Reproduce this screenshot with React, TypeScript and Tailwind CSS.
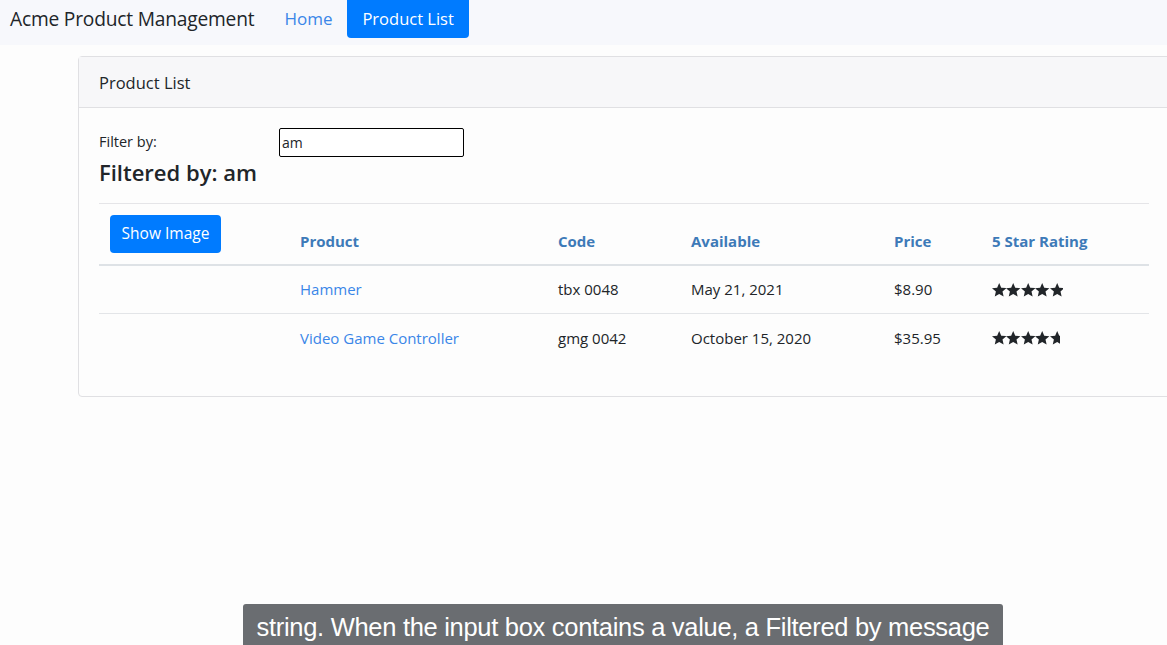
import React from "react";

const Star = () => (
  <svg viewBox="0 0 24 23" className="w-[14.4px] h-[14px] shrink-0" fill="#212529">
    <path d="M12 0l3.4 7.6 8.6.8-6.5 5.7 1.9 8.4L12 18.1 4.6 22.5l1.9-8.4L0 8.4l8.6-.8z" />
  </svg>
);

const Stars = ({ width }: { width: number }) => (
  <div className="overflow-hidden" style={{ width }}>
    <div className="flex w-[72px]">
      <Star />
      <Star />
      <Star />
      <Star />
      <Star />
    </div>
  </div>
);

export default function App() {
  const rows = [
    { name: "Hammer", code: "tbx 0048", date: "May 21, 2021", price: "$8.90", w: 71 },
    { name: "Video Game Controller", code: "gmg 0042", date: "October 15, 2020", price: "$35.95", w: 68 },
  ];
  return (
    <div
      className="relative w-[1167px] h-[645px] overflow-hidden bg-[#fdfdfd] text-[#212529]"
      style={{ fontFamily: '"Open Sans", "Noto Sans", sans-serif' }}
    >
      <nav className="flex items-start h-[45px] bg-[#f7f8fc]">
        <div className="pl-[10px] pt-[5px] text-[19.2px] leading-[27px] text-[#212529] tracking-[-0.2px]">
          Acme Product Management
        </div>
        <div className="ml-[30px] pt-[5px] text-[17px] leading-[27px] text-[#3a86e8]">Home</div>
        <div className="ml-[15px] h-[38px] px-[15px] flex items-center bg-[#007bff] text-white rounded-b-[4px] text-[16.5px] leading-[26px] pb-[1px]">
          Product List
        </div>
      </nav>

      <div className="ml-[78px] mt-[11px] w-[1120px] border border-[#e0e0e3] rounded-[4px] bg-[#fdfdfd]">
        <div className="h-[51px] bg-[#f7f7f9] border-b border-[#e0e0e3] flex items-center px-[20px] pt-[3px] text-[16.5px] text-[#212529]">
          Product List
        </div>
        <div className="pl-[20px] pt-[20px] pb-[20px] w-[1070px]">
          <div className="flex items-start">
            <div className="w-[180px] text-[14.5px] pt-[3px]">Filter by:</div>
            <input
              readOnly
              value="am"
              className="w-[185px] h-[29px] border border-black rounded-[2px] px-[2px] text-[14px] outline-none bg-white"
            />
          </div>
          <div className="text-[22px] font-semibold leading-[30px]">Filtered by: am</div>
          <div className="h-px bg-[#e5e5e8] mt-[16px]" />
          <div className="text-[15px]">
            <div className="flex items-end border-b-2 border-[#dee2e6] h-[62px] pb-[13px]">
              <div className="w-[189px] pl-[11px] self-start pt-[11px]">
                <div className="w-[111px] h-[38px] bg-[#007bff] rounded-[4px] text-white text-[15.5px] flex items-center justify-center">
                  Show Image
                </div>
              </div>
              <div className="flex font-bold text-[#3d7ab8] leading-[20px]">
                <div className="w-[258px] pl-[12px]">Product</div>
                <div className="w-[133px] pl-[12px]">Code</div>
                <div className="w-[203px] pl-[12px]">Available</div>
                <div className="w-[98px] pl-[12px]">Price</div>
                <div className="w-[168px] pl-[12px]">5 Star Rating</div>
              </div>
            </div>
            {rows.map((r, i) => (
              <div
                key={r.name}
                className={`flex items-center h-[48px] ${i === 0 ? "border-b border-[#e3e5e8]" : ""}`}
              >
                <div className="w-[189px]" />
                <div className="w-[258px] pl-[12px] text-[#3a86e8]">{r.name}</div>
                <div className="w-[133px] pl-[12px]">{r.code}</div>
                <div className="w-[203px] pl-[12px]">{r.date}</div>
                <div className="w-[98px] pl-[12px]">{r.price}</div>
                <div className="w-[168px] pl-[12px]">
                  <Stars width={r.w} />
                </div>
              </div>
            ))}
            <div className="h-[14px]" />
          </div>
        </div>
      </div>

      <div
        className="absolute left-[243px] top-[604px] w-[760px] h-[41px] bg-[#6a6d71] rounded-t-[3px] flex items-center justify-center pt-[5px] text-white text-[25.5px] tracking-[-0.3px]"
        style={{ fontFamily: '"Liberation Sans", Arial, sans-serif' }}
      >
        string. When the input box contains a value, a Filtered by message
      </div>
    </div>
  );
}
